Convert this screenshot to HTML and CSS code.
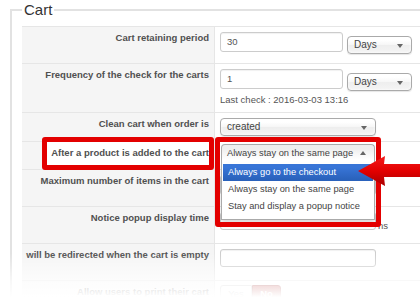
FILE: index.html
```html
<!DOCTYPE html>
<html lang="en">
<head>
    <meta charset="UTF-8">
    <title>Cart settings</title>
    <link rel="stylesheet" href="styles.css">
</head>
<body>

<fieldset class="panel">
    <legend>Cart</legend>

    <div class="form">
        <!-- Cart retaining period -->
        <div class="row">
            <div class="label">Cart retaining period</div>
            <div class="field">
                <span class="input input-short">30</span>
                <span class="chosen chosen-days">Days<b class="caret"></b></span>
            </div>
        </div>

        <!-- Frequency -->
        <div class="row row-tall">
            <div class="label">Frequency of the check for the carts</div>
            <div class="field field-stack">
                <div class="inline">
                    <span class="input input-short">1</span>
                    <span class="chosen chosen-days">Days<b class="caret"></b></span>
                </div>
                <div class="hint">Last check : 2016-03-03 13:16</div>
            </div>
        </div>

        <!-- Clean cart -->
        <div class="row row-short">
            <div class="label">Clean cart when order is</div>
            <div class="field">
                <span class="chosen chosen-wide">created<b class="caret"></b></span>
            </div>
        </div>

        <!-- After a product is added (highlighted) -->
        <div class="row row-short2">
            <div class="label label-marked">
                <span class="mark"></span>
                <span class="label-text">After a product is added to the cart</span>
            </div>
            <div class="field field-open">
                <div class="chosen-open">
                    <div class="chosen-single">Always stay on the same page<b class="caret caret-up"></b></div>
                    <ul class="chosen-drop">
                        <li class="active">Always go to the checkout</li>
                        <li>Always stay on the same page</li>
                        <li>Stay and display a popup notice</li>
                    </ul>
                </div>
                <span class="mark mark-drop"></span>
                <svg class="arrow" width="63" height="32" viewBox="0 0 63 32">
                    <defs>
                        <linearGradient id="arrowFill" x1="0" y1="0" x2="0" y2="1">
                            <stop offset="0" stop-color="#f21b1b"/>
                            <stop offset="0.5" stop-color="#e30000"/>
                            <stop offset="1" stop-color="#a80000"/>
                        </linearGradient>
                    </defs>
                    <polygon points="1,16 28,1 27,9 63,9 63,22 27,22 28,31" fill="url(#arrowFill)"/>
                </svg>
            </div>
        </div>

        <!-- Maximum number -->
        <div class="row">
            <div class="label">Maximum number of items in the cart</div>
            <div class="field">
                <span class="input input-long"></span>
            </div>
        </div>

        <!-- Notice popup -->
        <div class="row">
            <div class="label">Notice popup display time</div>
            <div class="field">
                <span class="input input-long input-low"></span>
                <span class="suffix">ns</span>
            </div>
        </div>

        <!-- Redirect -->
        <div class="row">
            <div class="label">will be redirected when the cart is empty</div>
            <div class="field">
                <span class="input input-long input-low"></span>
            </div>
        </div>

        <!-- Print -->
        <div class="row">
            <div class="label">Allow users to print their cart</div>
            <div class="field">
                <span class="switch">
                    <span class="switch-yes">Yes</span>
                    <span class="switch-no">No</span>
                </span>
            </div>
        </div>
    </div>
</fieldset>

<!-- Alt kısım beyaza solar -->
<div class="fade"></div>

</body>
</html>
```

FILE: styles.css
```css
/* Genel */
body {
    margin: 0;
    width: 420px;
    height: 305px;
    overflow: hidden;
    position: relative;
    background: #ffffff;
    font-family: "Liberation Sans", Arial, sans-serif;
    font-size: 9.5px;
    color: #555555;
}

/* Fieldset */
.panel {
    margin: 1px 0 0 10px;
    padding: 7px 0 0 10px;
    border: 2px solid #e2e2e2;
    border-right: none;
    width: 560px;
    min-width: 0;
}

.panel legend {
    padding: 0 2px;
    font-size: 15px;
    line-height: 18px;
    color: #333333;
}

/* Satırlar */
.row {
    display: grid;
    grid-template-columns: 193px 1fr;
    height: 37px;
    box-sizing: border-box;
    border-top: 1px solid #e6e6e6;
}

.row-tall { height: 49px; }
.row-short { height: 29px; }
.row-short2 { height: 28px; }

.label {
    background: #f5f5f5;
    border-right: 1px solid #e6e6e6;
    padding: 5px 5px 0 0;
    text-align: right;
    font-weight: bold;
    line-height: 12px;
    color: #505050;
    white-space: nowrap;
}

.field {
    display: flex;
    align-items: flex-start;
    gap: 4px;
    padding: 5px 0 0 5px;
    position: relative;
}

.field-stack {
    flex-direction: column;
    gap: 0;
}

.inline {
    display: flex;
    align-items: flex-start;
    gap: 4px;
}

.hint {
    margin-top: 3px;
    line-height: 12px;
    color: #555555;
}

/* Input */
.input {
    display: block;
    box-sizing: border-box;
    height: 20px;
    line-height: 18px;
    padding: 0 6px;
    border: 1px solid #cccccc;
    border-radius: 3px;
    box-shadow: inset 0 1px 1px rgba(0, 0, 0, 0.06);
    color: #555555;
    background: #ffffff;
}

.input-short { width: 123px; }
.input-long { width: 156px; }
.input-low { height: 18px; line-height: 16px; }

.suffix {
    margin: 8px 0 0 -2px;
    color: #555555;
}

/* Chosen select */
.chosen {
    position: relative;
    display: block;
    box-sizing: border-box;
    height: 18px;
    line-height: 16px;
    padding: 0 6px;
    margin-top: 4px;
    border: 1px solid #aaaaaa;
    border-radius: 4px;
    background: linear-gradient(#ffffff 20%, #f6f6f6 50%, #eeeeee 52%, #f4f4f4 100%);
    box-shadow: inset 0 0 3px #ffffff, 0 1px 1px rgba(0, 0, 0, 0.1);
    color: #444444;
    font-size: 10px;
}

.chosen-days { width: 65px; }
.chosen-wide { width: 156px; margin-top: 0; }

.caret {
    position: absolute;
    right: 8px;
    top: 7px;
    width: 0;
    height: 0;
    border-left: 3px solid transparent;
    border-right: 3px solid transparent;
    border-top: 4px solid #666666;
}

.caret-up {
    border-top: none;
    border-bottom: 4px solid #666666;
    top: 6px;
}

/* Açık dropdown */
.field-open {
    z-index: 5;
}

.chosen-open {
    position: relative;
    width: 154px;
    margin: -3px 0 0 1px;
}

.chosen-single {
    position: relative;
    box-sizing: border-box;
    height: 19px;
    line-height: 17px;
    padding: 0 6px 0 5px;
    border: 1px solid #aaaaaa;
    border-bottom: none;
    border-radius: 4px 4px 0 0;
    background: linear-gradient(#eeeeee 20%, #ffffff 80%);
    color: #444444;
    font-size: 9.3px;
}

.chosen-drop {
    position: absolute;
    left: 0;
    top: 19px;
    width: 154px;
    box-sizing: border-box;
    margin: 0;
    padding: 1px 1px 4px;
    list-style: none;
    background: #ffffff;
    border: 1px solid #aaaaaa;
    border-top: none;
    box-shadow: 0 4px 5px rgba(0, 0, 0, 0.15);
    color: #444444;
    font-size: 9.3px;
}

.chosen-drop li {
    height: 17px;
    line-height: 17px;
    padding: 0 5px;
    white-space: nowrap;
}

.chosen-drop li.active {
    background: linear-gradient(#3875d7 20%, #2a62bc 90%);
    color: #ffffff;
}

/* Kırmızı işaretler */
.mark {
    position: absolute;
    box-sizing: border-box;
    border: 5px solid #e30000;
    border-radius: 3px;
}

.label-marked {
    position: relative;
    z-index: 1;
}

.label-marked .mark {
    left: 20px;
    top: -5px;
    width: 172px;
    height: 33px;
    background: #ffffff;
}

.label-text {
    position: relative;
}

.mark-drop {
    left: 0;
    top: -5px;
    width: 166px;
    height: 90px;
}

.arrow {
    position: absolute;
    left: 142px;
    top: 13px;
}

/* Yes / No */
.switch {
    display: flex;
    margin-top: -1px;
    height: 18px;
    line-height: 16px;
}

.switch-yes {
    width: 32px;
    box-sizing: border-box;
    text-align: center;
    border: 1px solid #cccccc;
    border-radius: 3px 0 0 3px;
    color: #999999;
}

.switch-no {
    width: 29px;
    box-sizing: border-box;
    text-align: center;
    border: 1px solid #9a2b2b;
    border-radius: 0 3px 3px 0;
    background: linear-gradient(#c0504d, #a93a37);
    color: #ffffff;
    font-weight: bold;
}

/* Alt solma */
.fade {
    position: absolute;
    left: 0;
    right: 0;
    bottom: 0;
    height: 52px;
    z-index: 10;
    background: linear-gradient(rgba(255, 255, 255, 0) 0%, rgba(255, 255, 255, 0.75) 55%, #ffffff 85%);
}
```
